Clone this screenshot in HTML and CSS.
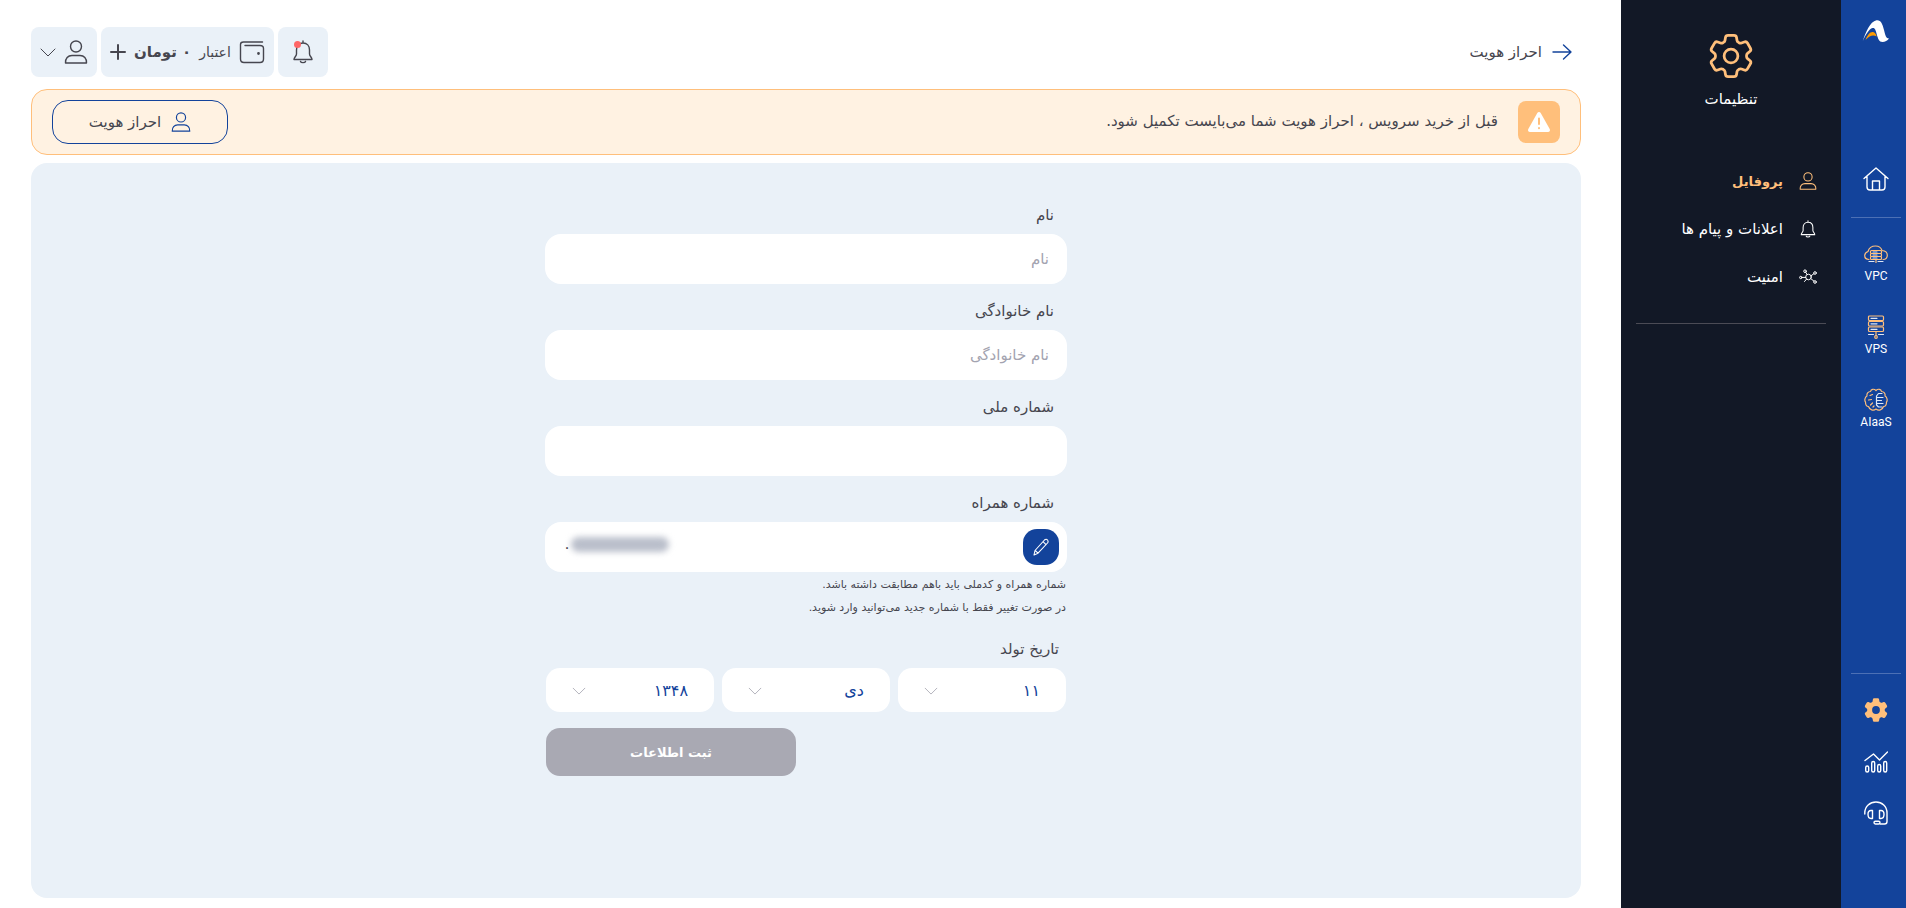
FILE: index.html
```html
<!DOCTYPE html>
<html lang="fa" dir="rtl">
  <head>
    <meta charset="utf-8">
    <title>احراز هویت</title>
    <link rel="stylesheet" href="styles.css">
  </head>
  <body>
    <!-- shared icons -->
    <svg class="sprite" width="0" height="0">
      <symbol id="i-user" viewBox="0 0 24 24">
        <circle cx="12" cy="6.500" r="5.500"/>
        <path d="M1.500 23c-.3-4.500 2.500-7.500 6.500-7.500h8c4 0 6.800 3 6.500 7.500z"/>
      </symbol>
      <symbol id="i-bell" viewBox="0 0 24 24">
        <path d="M12 1v2M12 3c-4 0-6.500 3-6.500 7v4c0 2-2.500 3.500-2.500 5.500h18c0-2-2.500-3.500-2.500-5.500v-4c0-4-2.500-7-6.500-7zM9.500 21.500c.5 1.500 4.500 1.500 5 0"/>
      </symbol>
      <symbol id="i-gear" viewBox="2 2 20 20">
        <path fill-rule="evenodd" d="M9.594 3.94c.09-.542.56-.94 1.11-.94h2.593c.55 0 1.02.398 1.11.94l.213 1.281c.063.374.313.686.645.87.074.04.147.083.22.127.325.196.72.257 1.075.124l1.217-.456a1.125 1.125 0 0 1 1.37.49l1.296 2.247a1.125 1.125 0 0 1-.26 1.431l-1.003.827c-.293.241-.438.613-.43.992a7.723 7.723 0 0 1 0 .255c-.008.378.137.75.43.991l1.004.827c.424.35.534.955.26 1.43l-1.298 2.247a1.125 1.125 0 0 1-1.369.491l-1.217-.456c-.355-.133-.75-.072-1.076.124a6.47 6.47 0 0 1-.22.128c-.331.183-.581.495-.644.869l-.213 1.281c-.09.543-.56.94-1.11.94h-2.594c-.55 0-1.019-.398-1.11-.94l-.213-1.281c-.062-.374-.312-.686-.644-.87a6.52 6.52 0 0 1-.22-.127c-.325-.196-.72-.257-1.076-.124l-1.217.456a1.125 1.125 0 0 1-1.369-.49l-1.297-2.247a1.125 1.125 0 0 1 .26-1.431l1.004-.827c.292-.24.437-.613.43-.991a6.932 6.932 0 0 1 0-.255c.007-.38-.138-.751-.43-.992l-1.004-.827a1.125 1.125 0 0 1-.26-1.43l1.297-2.247a1.125 1.125 0 0 1 1.37-.491l1.216.456c.356.133.751.072 1.076-.124.072-.044.146-.086.22-.128.332-.183.582-.495.644-.869l.214-1.28ZM15 12a3 3 0 1 1-6 0a3 3 0 0 1 6 0Z"/>
      </symbol>
      <symbol id="i-chevron" viewBox="0 0 16 9">
        <path d="M1 1l7 7 7-7"/>
      </symbol>
    </svg>

    <nav class="rail">
      <a href="#" class="logo" aria-label="خانه">
        <svg width="28" height="24" viewBox="0 0 28 24">
          <path fill="#fff" d="M.8 22C3.500 14 8 2.500 14.500 1.300c4.500-.5 6 3.700 7.500 9.700 1.300 5 2 8.500 5 8.500-1.500 2-4 3.500-6.500 3.500-3.500 0-4.500-3.500-5.700-7.500C13.700 11 13 8.500 10.500 9 7 10 3.500 16 .8 22z"/>
          <path fill="#ff9c00" d="M3.500 21c2-5 4.500-8.500 7.500-8 2 .5 3 2 3.700 4.500-3.200-2-6.700-1.500-11.200 3.500z"/>
        </svg>
      </a>
      <a href="#" class="home" aria-label="داشبورد">
        <svg class="icon" width="26" height="24" viewBox="0 0 26 24">
          <path d="M1 11.500L13 1l12 10.500M4 9.500V20c0 2 1 3 3 3h12c2 0 3-1 3-3V9.500M9.500 23v-9h7v9"/>
        </svg>
      </a>
      <div class="services">
        <a href="#">
          <svg class="icon orange" width="24" height="24" viewBox="0 0 24 24">
            <path d="M5 17.500C2 17.500.7 15.500.7 13.500.8 11 2.200 10.200 4 9.500 5 6 8 4 11.500 4c3 0 5.500 1.500 6.500 4.500 3.500.3 5.300 2.300 5.300 4.800 0 2.300-1.500 4.200-4.300 4.200"/>
            <rect x="6.500" y="8.500" width="11" height="3" rx="1"/>
            <rect x="6.500" y="11.500" width="11" height="3" rx="1"/>
            <rect x="6.500" y="14.500" width="11" height="3" rx="1"/>
            <path class="pale" d="M9 10h4M9 13h4M9 16h4M5 19.500h5M14 19.500h5"/>
            <path d="M12 17.500v3"/>
          </svg>
          VPC
        </a>
        <a href="#">
          <svg class="icon orange" width="24" height="24" viewBox="0 0 24 24">
            <rect x="4.500" y="1" width="15" height="4.500" rx="1"/>
            <rect x="4.500" y="6.500" width="15" height="4.500" rx="1"/>
            <rect x="4.500" y="12" width="15" height="4.500" rx="1"/>
            <path d="M12 16.500v4"/><circle cx="12" cy="22" r="1.300"/>
            <path class="pale" d="M7 3.300h6M7 8.800h6M7 14.300h6M4.500 19.500h5M14.500 19.500h5"/>
          </svg>
          VPS
        </a>
        <a href="#">
          <svg class="icon orange" width="24" height="24" viewBox="0 0 24 24">
            <path d="M12 2.500C10 .5 7 1 6.500 3.500 4 3.500 2.500 5.500 3 8 .5 9 .5 13 1.500 14c0 3 1.500 4.500 3 4.500 1 3.500 5 4.500 7.500 2.500 2.500 2 6.500 1 7.500-2.500 1.500 0 3-1.500 3-4.500 1-1 1-5-1.500-6 .5-2.500-1-4.500-3.500-4.500C17 1 14 .5 12 2.500z"/>
            <path d="M6 7.500l2.500-1M4.500 12l3-.5M8.500 15l-2 2M9 19l1-1"/>
            <path class="pale" d="M18 5.500h-3.500L12.500 8v9l2 2H18M12.500 9.500H19M12.500 12.500h5M12.500 15.500H19"/>
          </svg>
          AIaaS
        </a>
      </div>
      <div class="tools">
        <a href="#" aria-label="تنظیمات"><svg class="gear-solid" width="26" height="26"><use href="#i-gear"/></svg></a>
        <a href="#" aria-label="گزارش">
          <svg class="icon" width="24" height="22" viewBox="0 0 24 22">
            <path d="M1 9.500l8.500-6.500 6 6L23.500 1"/>
            <rect x="1.700" y="15" width="3" height="6" rx="1.500"/>
            <rect x="7.700" y="10.500" width="3" height="10.500" rx="1.500"/>
            <rect x="13.700" y="13.500" width="3" height="7.500" rx="1.500"/>
            <rect x="19.700" y="10.500" width="3" height="10.500" rx="1.500"/>
          </svg>
        </a>
        <a href="#" aria-label="پشتیبانی">
          <svg class="icon" width="24" height="24" viewBox="0 0 24 24">
            <path d="M.8 13v-1C.8 5.500 6 1 12 1s11 4.500 11 11v8.500c0 1.500-1 2.500-2.500 2.500H16"/>
            <path d="M8.500 9.500H7C5 9.500 4 11 4 13.300S5 17.500 7 17.500h1.500zM15.500 9.500H17c2 0 3 1.500 3 3.800s-1 4.200-3 4.200h-1.500z"/>
            <rect x="10" y="20.200" width="6" height="2.800" rx="1.400"/>
          </svg>
        </a>
      </div>
    </nav>

    <aside class="sidebar">
      <svg class="gear" width="46" height="46"><use href="#i-gear"/></svg>
      <h1>تنظیمات</h1>
      <ul class="menu">
        <li><a href="#" class="active"><svg class="icon" width="18" height="20"><use href="#i-user"/></svg>پروفایل</a></li>
        <li><a href="#"><svg class="icon" width="18" height="20"><use href="#i-bell"/></svg>اعلانات و پیام ها</a></li>
        <li><a href="#">
          <svg class="icon network" width="18" height="20" viewBox="0 0 18 20">
            <circle cx="9.500" cy="10" r="2.800"/>
            <circle cx="6" cy="4.200" r="1.300"/><circle cx="16" cy="6" r="1.300"/><circle cx="16" cy="15" r="1.300"/><circle cx="1.800" cy="10.500" r="1.200"/>
            <path d="M6.700 5.300l1.500 2.300M12 8.800l2.900-2.100M11.800 11.600l3.100 2.500M3 10.400h3.600M5.500 14.500l2-2.300"/>
          </svg>امنیت</a></li>
      </ul>
    </aside>

    <main>
      <header class="topbar">
        <a href="#" class="back">
          <svg class="icon" width="20" height="16" viewBox="0 0 20 16"><path d="M1 8h18M11.500 1L19 8l-7.500 7"/></svg>
          احراز هویت
        </a>
        <div class="actions">
          <button class="chip bell" aria-label="اعلانات">
            <svg class="icon" width="24" height="24"><use href="#i-bell"/></svg>
          </button>
          <button class="chip credit">
            <svg class="icon" width="26" height="24" viewBox="0 0 26 24">
              <path d="M23.500 2H4.500C2.500 2 1.500 3 1.500 4.500V19c0 2 1.500 3.500 3.500 3.500h16c2 0 3.500-1.500 3.500-3.500V8.500c0-2-1.500-3-3.500-3H6"/>
              <circle cx="19.500" cy="13.500" r=".7"/>
            </svg>
            <span>اعتبار</span>
            <strong>۰ تومان</strong>
            <svg class="plus" width="16" height="16" viewBox="0 0 16 16"><path d="M8 1v14M1 8h14"/></svg>
          </button>
          <button class="chip account" aria-label="حساب کاربری">
            <svg class="icon" width="24" height="26"><use href="#i-user"/></svg>
            <svg class="icon thin" width="16" height="9"><use href="#i-chevron"/></svg>
          </button>
        </div>
      </header>

      <section class="notice">
        <span class="warn">
          <svg width="24" height="22" viewBox="0 0 24 22">
            <path fill="#fff" d="M12 1c.8 0 1.300.4 1.700 1.100l9 16c.8 1.500 0 2.900-1.700 2.900H3c-1.700 0-2.500-1.400-1.700-2.900l9-16C10.700 1.400 11.200 1 12 1z"/>
            <path stroke="#ffbf7b" stroke-width="2" stroke-linecap="round" d="M12 7.500v5.500M12 17v.2"/>
          </svg>
        </span>
        <p>قبل از خرید سرویس ، احراز هویت شما می‌بایست تکمیل شود.</p>
        <button class="verify">
          <svg class="icon" width="20" height="22"><use href="#i-user"/></svg>
          احراز هویت
        </button>
      </section>

      <section class="card">
        <form>
          <div class="field">
            <label for="name">نام</label>
            <input id="name" type="text" placeholder="نام">
          </div>
          <div class="field">
            <label for="family">نام خانوادگی</label>
            <input id="family" type="text" placeholder="نام خانوادگی">
          </div>
          <div class="field">
            <label for="national">شماره ملی</label>
            <input id="national" type="text">
          </div>
          <div class="field">
            <label for="mobile">شماره همراه</label>
            <div class="mobile">
              <input id="mobile" type="tel" dir="ltr" value="۰" readonly>
              <span class="smear"></span>
              <button type="button" class="edit" aria-label="ویرایش">
                <svg class="icon" width="16" height="18" viewBox="0 0 16 18">
                  <path d="M1 17l1-4.500L11.500 2c1-1 2.200-1 3 0s.8 2 0 3L5 15.200zM10 3.700l3 2.900M2.200 12.500L5 15.200"/>
                </svg>
              </button>
            </div>
          </div>
          <p class="hint">شماره همراه و کدملی باید باهم مطابقت داشته باشد.<br>در صورت تغییر فقط با شماره جدید می‌توانید وارد شوید.</p>

          <fieldset class="birth">
            <legend>تاریخ تولد</legend>
            <div class="select">
              <select aria-label="روز"><option>۱۱</option></select>
              <svg width="14" height="8"><use href="#i-chevron"/></svg>
            </div>
            <div class="select">
              <select aria-label="ماه"><option>دی</option></select>
              <svg width="14" height="8"><use href="#i-chevron"/></svg>
            </div>
            <div class="select">
              <select aria-label="سال"><option>۱۳۴۸</option></select>
              <svg width="14" height="8"><use href="#i-chevron"/></svg>
            </div>
          </fieldset>
          <button class="submit" disabled>ثبت اطلاعات</button>
        </form>
      </section>
    </main>
  </body>
</html>
```
FILE: styles.css
```css
:root {
  --blue: #13439b;
  --dark: #121826;
  --orange: #ffbf7b;
  --pale: #eaf1f8;
  --text: #46464f;
}
* {
  box-sizing: border-box;
}
body {
  margin: 0;
  min-height: 100vh;
  display: flex;
  font-family: 'DejaVu Sans', sans-serif;
  font-size: 15px;
  color: var(--text);
  background: #fff;
}
a {
  color: inherit;
  text-decoration: none;
}
button, input, select {
  font: inherit;
  color: inherit;
  border: 0;
}
svg {
  display: block;
  flex: none;
}
.sprite {
  position: absolute;
}
.icon {
  fill: none;
  stroke: currentColor;
  stroke-width: 1.4;
  stroke-linecap: round;
  stroke-linejoin: round;
}
.thin {
  stroke-width: 1;
}

/* blue rail */
.rail {
  flex: 0 0 65px;
  display: flex;
  flex-direction: column;
  align-items: center;
  padding: 19px 5px 83px 10px;
  background: var(--blue);
  color: #fff;
}
.home {
  margin-top: 124px;
}
.services {
  align-self: stretch;
  margin-top: 26px;
  padding-top: 24px;
  border-top: 1px solid #4c70b5;
  display: flex;
  flex-direction: column;
  gap: 31px;
  font-family: Roboto, sans-serif;
  font-size: 12px;
  line-height: 16px;
}
.services a {
  display: flex;
  flex-direction: column;
  align-items: center;
  gap: 2px;
}
.services svg {
  stroke-width: 1.2;
}
.orange {
  stroke: var(--orange);
}
.pale {
  stroke: #dfe7f5;
}
.tools {
  align-self: stretch;
  margin-top: auto;
  padding-top: 23px;
  border-top: 1px solid #4c70b5;
  display: flex;
  flex-direction: column;
  align-items: center;
  gap: 28px;
}
.gear-solid {
  fill: var(--orange);
}

/* settings menu */
.sidebar {
  flex: 0 0 220px;
  padding: 33px 15px;
  background: var(--dark);
  color: #fff;
}
.gear {
  margin: 0 auto;
  fill: none;
  stroke: var(--orange);
  stroke-width: 1.2;
}
.sidebar h1 {
  margin: 8px 0 0;
  font-size: 15px;
  font-weight: normal;
  line-height: 24px;
  text-align: center;
}
.menu {
  list-style: none;
  margin: 46px 0 0;
  padding: 0 9px 22px;
  border-bottom: 1px solid #4b4b55;
}
.menu a {
  display: flex;
  align-items: center;
  gap: 16px;
  height: 48px;
}
.menu .active {
  color: var(--orange);
  font-size: 13px;
  font-weight: bold;
}
.network {
  stroke-width: 1;
}

/* main column */
main {
  flex: 1;
  display: flex;
  flex-direction: column;
  padding: 27px 40px 10px 31px;
}
.topbar {
  display: flex;
  justify-content: space-between;
  align-items: center;
  padding-right: 9px;
}
.back {
  display: flex;
  align-items: center;
  gap: 10px;
}
.back svg {
  color: var(--blue);
}
.actions {
  display: flex;
  gap: 4px;
}
.chip {
  display: flex;
  align-items: center;
  height: 50px;
  border-radius: 8px;
  padding: 0 9px;
  background: var(--pale);
}
.bell {
  position: relative;
  padding: 0 13px;
}
.bell::after {
  content: '';
  position: absolute;
  left: 16px;
  top: 14px;
  width: 7px;
  height: 7px;
  border-radius: 50%;
  background: #ff6767;
}
.credit {
  gap: 8px;
}
.credit strong {
  font-size: 15px;
}
.credit span {
  font-size: 14px;
}
.plus {
  fill: none;
  stroke: currentColor;
  stroke-width: 2;
  stroke-linecap: round;
}
.account {
  gap: 8px;
}
.notice {
  display: flex;
  align-items: center;
  gap: 20px;
  height: 66px;
  margin-top: 12px;
  padding: 0 20px;
  border: 1px solid var(--orange);
  border-radius: 16px;
  background: #fff2e2;
}
.notice p {
  margin: 0 0 2px;
}
.warn {
  display: grid;
  place-items: center;
  width: 42px;
  height: 42px;
  border-radius: 8px;
  background: var(--orange);
}
.verify {
  display: flex;
  align-items: center;
  justify-content: center;
  gap: 10px;
  width: 176px;
  height: 44px;
  margin-right: auto;
  border: 1px solid var(--blue);
  border-radius: 16px;
  background: none;
}
.verify svg {
  color: var(--blue);
}

/* identity form */
.card {
  flex: 1;
  margin-top: 8px;
  padding: 40px 16px;
  border-radius: 16px;
  background: var(--pale);
}
form {
  max-width: 522px;
  margin: 0 auto;
}
.field {
  margin-bottom: 15px;
}
.field label {
  display: block;
  padding: 0 13px;
  line-height: 24px;
  margin-bottom: 7px;
}
.field input {
  display: block;
  width: 100%;
  height: 50px;
  padding: 0 18px;
  border-radius: 16px;
  background: #fff;
}
.field input::placeholder {
  color: #a3a3b0;
}
.mobile {
  position: relative;
}
.edit {
  position: absolute;
  right: 8px;
  top: 7px;
  display: grid;
  place-items: center;
  width: 36px;
  height: 36px;
  padding: 0;
  border-radius: 14px;
  background: var(--blue);
  color: #fff;
}
.edit svg {
  stroke-width: 1.1;
}
.smear {
  position: absolute;
  left: 26px;
  top: 15px;
  width: 98px;
  height: 15px;
  border-radius: 8px;
  background: #babfcb;
  filter: blur(3px);
}
.hint {
  margin: -14px 1px 0;
  font-size: 11px;
  line-height: 23px;
}
.birth {
  display: flex;
  gap: 8px;
  margin: 18px 1px 16px;
  padding: 0;
  border: 0;
}
.birth legend {
  padding: 0 7px;
  line-height: 24px;
  margin-bottom: 7px;
}
.select {
  position: relative;
  flex: 1;
}
.select select {
  appearance: none;
  width: 100%;
  height: 44px;
  padding: 0 26px;
  border-radius: 14px;
  background: #fff;
  color: var(--blue);
  font-size: 16px;
}
.select svg {
  position: absolute;
  left: 26px;
  top: 19px;
  fill: none;
  stroke: #a9a9b3;
  pointer-events: none;
}
.submit {
  display: block;
  width: 250px;
  height: 48px;
  margin: 0 auto 0 1px;
  border-radius: 14px;
  background: #a9a9b3;
  color: #fff;
  font-size: 13px;
  font-weight: bold;
}
```
